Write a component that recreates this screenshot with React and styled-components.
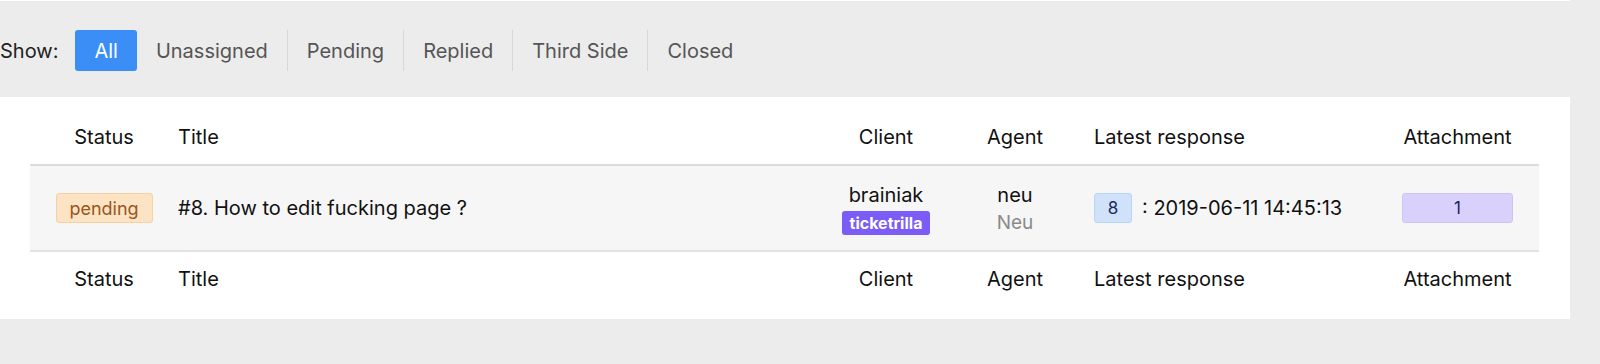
import styled, { createGlobalStyle } from 'styled-components';

const GlobalStyle = createGlobalStyle`
  body {
    margin: 0;
    background: #ececec;
    font-family: Inter, "Noto Sans", sans-serif;
    color: #111;
  }
`;

const tabs = ['All', 'Unassigned', 'Pending', 'Replied', 'Third Side', 'Closed'];

const columns = ['Status', 'Title', 'Client', 'Agent', 'Latest response', 'Attachment'];

const App = () => {
  return (
    <>
      <GlobalStyle />
      <TopStrip />
      <FilterBar>
        <Label>Show:</Label>
        {tabs.map((tab, i) => (
          <Tab key={tab} active={i === 0} divided={i > 1}>
            {tab}
          </Tab>
        ))}
      </FilterBar>
      <Panel>
        <HeadRow>
          {columns.map((c) => (
            <HeadCell key={c} align={c === 'Title' || c === 'Latest response' ? 'start' : 'center'}>
              {c}
            </HeadCell>
          ))}
        </HeadRow>
        <BodyRow>
          <Cell align="center">
            <StatusBadge>pending</StatusBadge>
          </Cell>
          <Cell align="start">#8. How to edit fucking page ?</Cell>
          <Cell align="center">
            <Stack>
              <span>brainiak</span>
              <SiteBadge>ticketrilla</SiteBadge>
            </Stack>
          </Cell>
          <Cell align="center">
            <Stack>
              <span>neu</span>
              <Muted>Neu</Muted>
            </Stack>
          </Cell>
          <Cell align="start">
            <CountBadge>8</CountBadge>
            <Time>: 2019-06-11 14:45:13</Time>
          </Cell>
          <Cell align="stretch">
            <AttachBadge>1</AttachBadge>
          </Cell>
        </BodyRow>
        <FootRow>
          {columns.map((c) => (
            <HeadCell key={c} align={c === 'Title' || c === 'Latest response' ? 'start' : 'center'}>
              {c}
            </HeadCell>
          ))}
        </FootRow>
      </Panel>
    </>
  );
};

const TopStrip = styled.div`
  width: 1570px;
  height: 1px;
  background: #fff;
`;

const FilterBar = styled.div`
  display: flex;
  align-items: center;
  height: 41px;
  margin-top: 29px;
`;

const Label = styled.span`
  font-size: 20px;
  color: #222;
  margin-right: 17px;
`;

const Tab = styled.div`
  display: flex;
  align-items: center;
  height: 41px;
  padding: 0 19px;
  font-size: 20px;
  color: ${(p) => (p.active ? '#fff' : '#555')};
  background: ${(p) => (p.active ? '#3a8ef6' : 'transparent')};
  border-radius: ${(p) => (p.active ? '3px' : '0')};
  border-left: ${(p) => (p.divided ? '1px solid #d7d7d7' : 'none')};
`;

const Panel = styled.div`
  width: 1570px;
  box-sizing: border-box;
  margin-top: 26px;
  background: #fff;
  padding: 13px 31px 13px 30px;
`;

const Row = styled.div`
  display: grid;
  grid-template-columns: 148px 1fr 100px 158px 308px 111px;
  padding-right: 26px;
  align-items: center;
`;

const HeadRow = styled(Row)`
  height: 54px;
  border-bottom: 2px solid #dcdcdc;
`;

const BodyRow = styled(Row)`
  height: 84px;
  background: #f6f6f6;
  border-bottom: 2px solid #e2e2e2;
`;

const FootRow = styled(Row)`
  height: 54px;
`;

const HeadCell = styled.div`
  font-size: 20px;
  font-weight: 400;
  color: #111;
  text-align: ${(p) => (p.align === 'start' ? 'left' : 'center')};
  white-space: nowrap;
`;

const Cell = styled.div`
  display: flex;
  align-items: center;
  justify-content: ${(p) => (p.align === 'start' ? 'flex-start' : 'center')};
  font-size: 20px;
  color: #111;
  white-space: nowrap;
  & > * {
    flex: ${(p) => (p.align === 'stretch' ? '1' : 'none')};
  }
`;

const Stack = styled.div`
  display: flex;
  flex-direction: column;
  align-items: center;
  gap: 4px;
  line-height: 24px;
  margin-top: 2px;
`;

const Muted = styled.span`
  color: #8a8a8a;
  font-size: 19px;
`;

const Badge = styled.span`
  display: inline-flex;
  align-items: center;
  justify-content: center;
  box-sizing: border-box;
  height: 30px;
  border-radius: 3px;
  font-size: 17px;
`;

const StatusBadge = styled(Badge)`
  width: 97px;
  background: #fbe3c3;
  border: 1px solid #f4d0a2;
  color: #9a561c;
  font-size: 18px;
`;

const SiteBadge = styled(Badge)`
  height: 24px;
  padding: 0 8px;
  background: #7b5cf6;
  color: #fff;
  font-weight: 700;
  font-size: 16px;
`;

const CountBadge = styled(Badge)`
  width: 38px;
  background: #cfe2fa;
  border: 1px solid #b9d5f5;
  color: #1b2c5c;
`;

const Time = styled.span`
  margin-left: 10px;
`;

const AttachBadge = styled(Badge)`
  background: #d9d1fb;
  border: 1px solid #cdc4f6;
  color: #1e1b6b;
`;

export default App;
